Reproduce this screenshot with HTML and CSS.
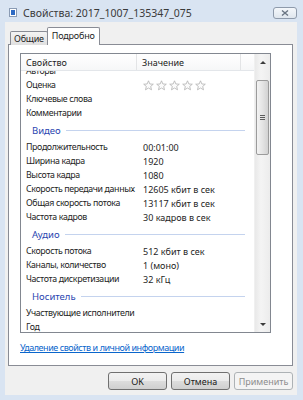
FILE: index.html
```html
<!DOCTYPE html>
<html lang="ru">
<head>
  <meta charset="UTF-8">
  <title>Свойства: 2017_1007_135347_075</title>
  <link rel="stylesheet" href="styles.css">
</head>
<body>
  <div class="window">
    <div class="titlebar">
      <svg class="app-icon" width="8" height="9" viewBox="0 0 8 9">
        <rect x="0.5" y="0.5" width="7" height="8" fill="#fff" stroke="#8a9bb4"/>
        <rect x="2" y="2" width="4" height="5" fill="#2f6bc4"/>
      </svg>
      <span class="title">Свойства: 2017_1007_135347_075</span>
      <div class="close-btn">
        <svg width="8" height="6" viewBox="0 0 8 6">
          <path d="M1 0.5 L7 5.5 M7 0.5 L1 5.5" stroke="#6b7684" stroke-width="1.4"/>
        </svg>
      </div>
    </div>

    <div class="client">
      <div class="tabs">
        <div class="tab">Общие</div>
        <div class="tab active">Подробно</div>
      </div>

      <div class="panel">
        <div class="list">
          <div class="list-main">
            <div class="list-head">
              <div class="col-name">Свойство</div>
              <div class="col-value">Значение</div>
              <div class="col-extra"></div>
            </div>
            <div class="viewport">
              <div class="rows">
                <div class="row"><span class="name">Авторы</span><span class="value"></span></div>
                <div class="row">
                  <span class="name">Оценка</span>
                  <span class="value stars">
                    <svg class="star" viewBox="0 0 11 11"><path d="M5.5 0.8 L6.9 4 L10.3 4.2 L7.7 6.4 L8.5 9.8 L5.5 8 L2.5 9.8 L3.3 6.4 L0.7 4.2 L4.1 4 Z"/></svg>
                    <svg class="star" viewBox="0 0 11 11"><path d="M5.5 0.8 L6.9 4 L10.3 4.2 L7.7 6.4 L8.5 9.8 L5.5 8 L2.5 9.8 L3.3 6.4 L0.7 4.2 L4.1 4 Z"/></svg>
                    <svg class="star" viewBox="0 0 11 11"><path d="M5.5 0.8 L6.9 4 L10.3 4.2 L7.7 6.4 L8.5 9.8 L5.5 8 L2.5 9.8 L3.3 6.4 L0.7 4.2 L4.1 4 Z"/></svg>
                    <svg class="star" viewBox="0 0 11 11"><path d="M5.5 0.8 L6.9 4 L10.3 4.2 L7.7 6.4 L8.5 9.8 L5.5 8 L2.5 9.8 L3.3 6.4 L0.7 4.2 L4.1 4 Z"/></svg>
                    <svg class="star" viewBox="0 0 11 11"><path d="M5.5 0.8 L6.9 4 L10.3 4.2 L7.7 6.4 L8.5 9.8 L5.5 8 L2.5 9.8 L3.3 6.4 L0.7 4.2 L4.1 4 Z"/></svg>
                  </span>
                </div>
                <div class="row"><span class="name">Ключевые слова</span><span class="value"></span></div>
                <div class="row"><span class="name">Комментарии</span><span class="value"></span></div>

                <div class="group"><span>Видео</span><i class="group-line"></i></div>
                <div class="row"><span class="name">Продолжительность</span><span class="value">00:01:00</span></div>
                <div class="row"><span class="name">Ширина кадра</span><span class="value">1920</span></div>
                <div class="row"><span class="name">Высота кадра</span><span class="value">1080</span></div>
                <div class="row"><span class="name">Скорость передачи данных</span><span class="value">12605 кбит в сек</span></div>
                <div class="row"><span class="name">Общая скорость потока</span><span class="value">13117 кбит в сек</span></div>
                <div class="row"><span class="name">Частота кадров</span><span class="value">30 кадров в сек</span></div>

                <div class="group"><span>Аудио</span><i class="group-line"></i></div>
                <div class="row"><span class="name">Скорость потока</span><span class="value">512 кбит в сек</span></div>
                <div class="row"><span class="name">Каналы, количество</span><span class="value">1 (моно)</span></div>
                <div class="row"><span class="name">Частота дискретизации</span><span class="value">32 кГц</span></div>

                <div class="group"><span>Носитель</span><i class="group-line"></i></div>
                <div class="row"><span class="name">Участвующие исполнители</span><span class="value"></span></div>
                <div class="row"><span class="name">Год</span><span class="value"></span></div>
              </div>
            </div>
          </div>

          <div class="scrollbar">
            <div class="arrow up"></div>
            <div class="track">
              <div class="thumb"><span class="grip"></span></div>
            </div>
            <div class="arrow down"></div>
          </div>
        </div>

        <a class="link" href="#">Удаление свойств и личной информации</a>
      </div>

      <div class="buttons">
        <button class="btn">OK</button>
        <button class="btn">Отмена</button>
        <button class="btn" disabled>Применить</button>
      </div>
    </div>
  </div>
</body>
</html>
```

FILE: styles.css
```css
body{
  margin: 0;
  font-family: "Noto Sans", "Open Sans", sans-serif;
  font-size: 9px;
  color: #1e1e1e;
}

.window{
  width: 303px;
  height: 400px;
  background-color: #d9e4f2;
  display: flex;
  flex-direction: column;
}

/* title bar */
.titlebar{
  height: 22px;
  box-sizing: border-box;
  padding: 3px 6px 0 9px;
  display: flex;
  align-items: center;
}
.app-icon{
  margin-right: 6px;
}
.title{
  font-size: 10.5px;
  color: #3a3a3a;
  flex: 1;
}
.close-btn{
  width: 24px;
  height: 12px;
  box-sizing: border-box;
  border: 1px solid #8e9aab;
  border-radius: 3px;
  background: linear-gradient(#f4f7fb, #dfe6ee);
  display: flex;
  align-items: center;
  justify-content: center;
}

/* dialog body */
.client{
  flex: 1;
  margin: 0 6px 5px 5px;
  background-color: #f0f0f0;
  display: flex;
  flex-direction: column;
}

.tabs{
  height: 22px;
  box-sizing: border-box;
  padding: 5px 0 0 5px;
  display: flex;
  align-items: flex-end;
  position: relative;
  z-index: 1;
}
.tab{
  height: 14px;
  box-sizing: border-box;
  padding: 0 3px;
  border: 1px solid #898c95;
  border-bottom: none;
  border-radius: 2px 2px 0 0;
  background: linear-gradient(#f3f3f3, #e0e0e0);
  display: flex;
  align-items: center;
  margin-bottom: -1px;
  margin-right: -1px;
  letter-spacing: -0.2px;
}
.tab.active{
  height: 18px;
  padding: 0 4px 2px 4px;
  background: #fff;
}

.panel{
  height: 322px;
  box-sizing: border-box;
  margin: 0 4px 0 3px;
  border: 1px solid #898c95;
  background-color: #fff;
  padding: 8px 0 0 11px;
}

.list{
  width: 251px;
  height: 280px;
  box-sizing: border-box;
  border: 1px solid #828790;
  display: flex;
}
.list-main{
  flex: 1;
  display: flex;
  flex-direction: column;
  min-width: 0;
}
.list-head{
  height: 17px;
  box-sizing: border-box;
  border-bottom: 1px solid #e3e6ea;
  display: flex;
  align-items: center;
  background: linear-gradient(#ffffff, #f6f7f8);
  position: relative;
  z-index: 1;
}
.col-name{
  width: 116px;
  box-sizing: border-box;
  padding-left: 5px;
  border-right: 1px solid #e3e4e6;
  height: 100%;
  display: flex;
  align-items: center;
}
.col-value{
  width: 104px;
  box-sizing: border-box;
  padding-left: 5px;
  border-right: 1px solid #e3e4e6;
  height: 100%;
  display: flex;
  align-items: center;
}
.col-extra{
  flex: 1;
}

.viewport{
  flex: 1;
  overflow: hidden;
}
.rows{
  margin-top: -7px;
}
.row{
  height: 14px;
  display: flex;
  align-items: center;
}
.name{
  width: 116px;
  box-sizing: border-box;
  padding-left: 5px;
  white-space: nowrap;
  overflow: hidden;
  text-overflow: ellipsis;
  font-size: 8.8px;
  letter-spacing: -0.35px;
}
.value{
  padding-left: 6px;
  white-space: nowrap;
}
.stars{
  display: flex;
  gap: 2px;
  padding-top: 1px;
}
.star{
  width: 11px;
  height: 11px;
  fill: #fbfbfb;
  stroke: #b2b2b2;
  stroke-width: 0.8;
}

.group{
  height: 20px;
  display: flex;
  align-items: center;
  padding: 0 9px 0 11px;
  color: #2a45b0;
  font-size: 9.5px;
}
.group-line{
  flex: 1;
  height: 1px;
  margin-left: 5px;
  background-color: #c4d3ee;
}

/* scrollbar */
.scrollbar{
  width: 15px;
  display: flex;
  flex-direction: column;
  background: linear-gradient(90deg, #e9e9e9, #f4f4f4 40%, #ececec);
  border-left: 1px solid #f0f0f0;
}
.arrow{
  height: 16px;
  display: flex;
  align-items: center;
  justify-content: center;
}
.arrow.up::after{
  content: "";
  border-left: 3px solid transparent;
  border-right: 3px solid transparent;
  border-bottom: 3px solid #3c3c3c;
}
.arrow.down::after{
  content: "";
  border-left: 3px solid transparent;
  border-right: 3px solid transparent;
  border-top: 3px solid #3c3c3c;
}
.track{
  flex: 1;
  padding-top: 10px;
}
.thumb{
  height: 75px;
  margin: 0 1px;
  box-sizing: border-box;
  border: 1px solid #9b9b9b;
  border-radius: 2px;
  background: linear-gradient(90deg, #f3f3f3, #e4e4e4 50%, #d2d2d2);
  display: flex;
  align-items: center;
  justify-content: center;
}
.grip{
  width: 5px;
  height: 5px;
  background: repeating-linear-gradient(#5c5c5c 0 1px, transparent 1px 2px);
}

.link{
  display: inline-block;
  margin-top: 9px;
  line-height: 12px;
  color: #0a66cc;
  text-decoration: underline;
  letter-spacing: -0.45px;
}

/* buttons */
.buttons{
  display: flex;
  justify-content: flex-end;
  gap: 4px;
  padding: 6px 4px 0 0;
}
.btn{
  width: 59px;
  height: 18px;
  font-family: "Noto Sans", "Open Sans", sans-serif;
  font-size: 9px;
  color: #1a1a1a;
  border: 1px solid #707070;
  border-radius: 3px;
  background: linear-gradient(#f2f2f2, #ebebeb 50%, #dddddd 51%, #cfcfcf);
  padding: 0;
}
.btn:disabled{
  color: #8d8d8d;
  border-color: #adb2b5;
  background: #f4f4f4;
}
```
